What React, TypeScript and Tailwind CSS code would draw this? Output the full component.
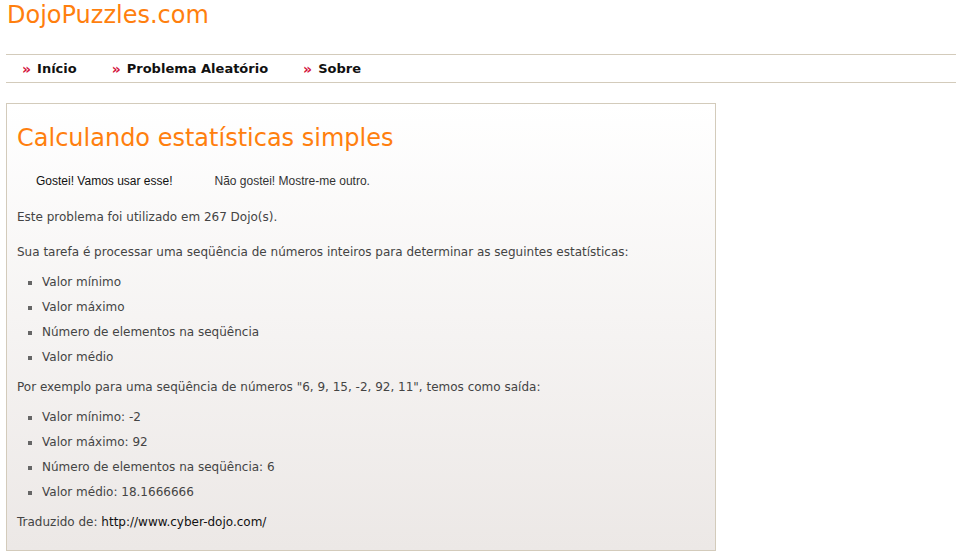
import React from "react";

export default function App() {
  const tarefa = ["Valor mínimo", "Valor máximo", "Número de elementos na seqüência", "Valor médio"];
  const saida = ["Valor mínimo: -2", "Valor máximo: 92", "Número de elementos na seqüência: 6", "Valor médio: 18.1666666"];

  return (
    <div className="bg-white min-h-[557px] px-[6px] font-['DejaVu_Sans',Verdana,sans-serif] text-[12px] text-[#444]">
      {/* Header */}
      <h1 className="text-[#ff7f0e] text-[24px] leading-[30px] pl-[1px] pt-0 h-[54px]">DojoPuzzles.com</h1>

      {/* Nav */}
      <nav className="w-[950px] h-[29px] border-y border-[#d3cbbb] flex items-center pl-[16px] gap-[35px] text-[13px] font-bold text-[#111]">
        {["Início", "Problema Aleatório", "Sobre"].map((item) => (
          <a key={item} href="#" className="flex items-center gap-[6px]">
            <span className="text-[#d4143c] text-[14px] leading-none">»</span>
            <span>{item}</span>
          </a>
        ))}
      </nav>

      {/* Problem box */}
      <div className="mt-[20px] w-[710px] h-[448px] border border-[#d3cbbb] bg-gradient-to-b from-white to-[#ece8e6] px-[10px]">
        <h2 className="text-[#ff7f0e] text-[24px] leading-[32px] pt-[18px]">Calculando estatísticas simples</h2>

        <div className="flex mt-[20px] font-['Liberation_Sans',Arial,sans-serif] text-[12px] leading-[14px]">
          <button className="ml-[19px] text-[#111]">Gostei! Vamos usar esse!</button>
          <button className="ml-[42px] text-[#333]">Não gostei! Mostre-me outro.</button>
        </div>

        <p className="mt-[22px] leading-[15px]">Este problema foi utilizado em 267 Dojo(s).</p>
        <p className="mt-[20px] leading-[15px]">Sua tarefa é processar uma seqüência de números inteiros para determinar as seguintes estatísticas:</p>
        <ul className="mt-[15px] mb-[15px] list-[square] pl-[25px] marker:text-[#666]">
          {tarefa.map((t) => (
            <li key={t} className="leading-[15px] mb-[10px]">{t}</li>
          ))}
        </ul>
        <p className="leading-[15px]">Por exemplo para uma seqüência de números "6, 9, 15, -2, 92, 11", temos como saída:</p>
        <ul className="mt-[15px] mb-[15px] list-[square] pl-[25px] marker:text-[#666]">
          {saida.map((t) => (
            <li key={t} className="leading-[15px] mb-[10px]">{t}</li>
          ))}
        </ul>
        <p className="leading-[15px]">
          Traduzido de: <a href="#" className="text-[#111]">http://www.cyber-dojo.com/</a>
        </p>
      </div>
    </div>
  );
}
